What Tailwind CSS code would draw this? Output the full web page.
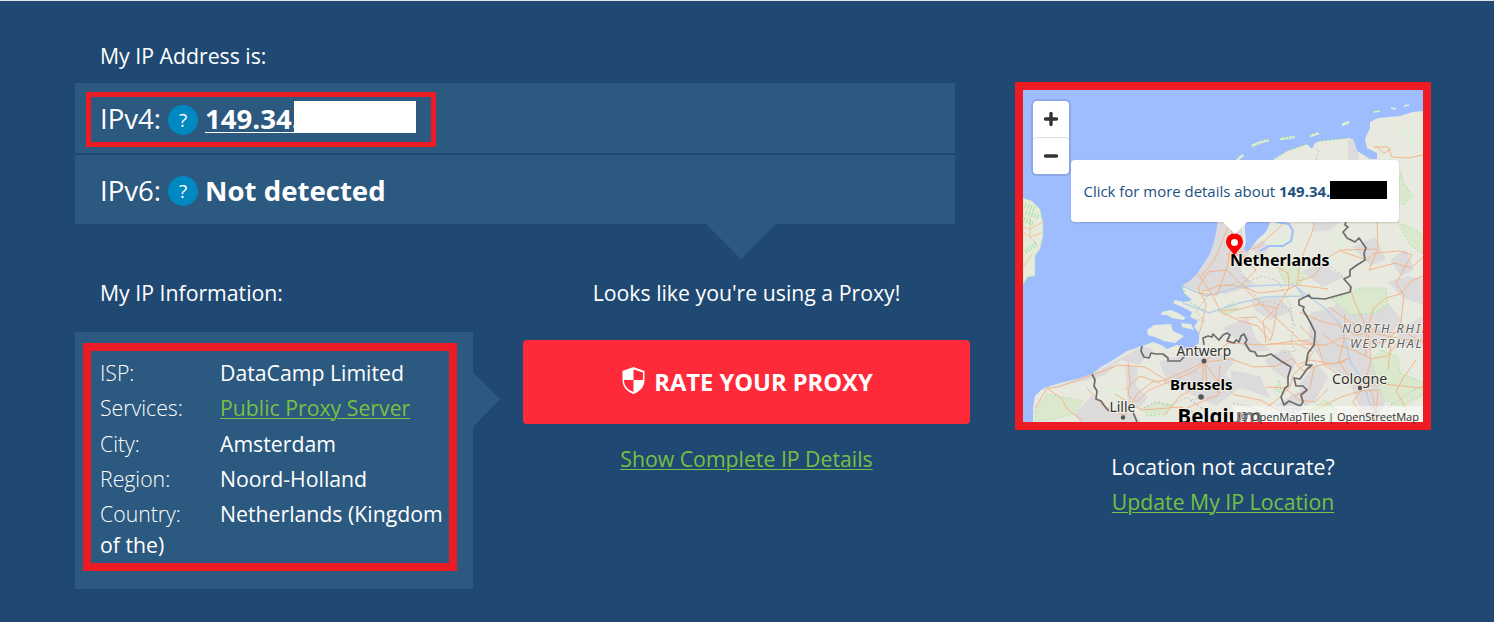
<!DOCTYPE html>
<html lang="en">
<head>
<meta charset="utf-8">
<title>My IP Address</title>
<script src="https://cdn.jsdelivr.net/npm/@tailwindcss/browser@4"></script>
</head>
<body class="h-[622px] overflow-hidden border-t border-[#dfe6ec] bg-[#1f4972] font-['Open_Sans',sans-serif] text-[21.25px] leading-[30px] text-white">
<main class="flex pl-[75px]">
  <div class="w-[895px] shrink-0">
    <h1 class="pt-[40px] pl-[25px]">My IP Address is:</h1>
    <section class="relative mt-[12px] w-[880px]">
      <div class="relative flex h-[70px] items-center bg-[#2c5980] pl-[25px] text-[27.6px]">
        <span class="w-[68px]">IPv4:</span>
        <span class="mt-[3px] flex size-[30px] items-center justify-center rounded-full bg-[#0089c1] text-[19px]">?</span>
        <a class="ml-[7px] font-bold underline decoration-1 underline-offset-3">149.34.</a>
        <span class="absolute top-[18px] left-[219px] h-8 w-[122px] bg-white"></span>
        <span class="absolute top-[9px] left-[11px] h-[55px] w-[350px] border-5 border-[#ed1c24]"></span>
      </div>
      <div class="mt-[2px] flex h-[69px] items-center bg-[#2c5980] pl-[25px] text-[27.6px]">
        <span class="w-[68px]">IPv6:</span>
        <span class="mt-[3px] flex size-[30px] items-center justify-center rounded-full bg-[#0089c1] text-[19px]">?</span>
        <span class="ml-[7px] font-bold">Not detected</span>
      </div>
      <svg class="absolute top-full left-[631px] h-[35px] w-[70px]" viewBox="0 0 70 35"><path d="M0 0H70L35 35Z" fill="#2c5980"/></svg>
    </section>
    <div class="flex gap-[50px]">
      <div class="w-[398px]">
        <h2 class="mt-[54px] pl-[25px]">My IP Information:</h2>
        <section class="relative mt-[24px] h-[257px] bg-[#2c5980] pt-[26px] pl-[25px]">
          <div class="flex h-[35px]"><span class="w-[120px] font-light">ISP:</span><span>DataCamp Limited</span></div>
          <div class="flex h-[36px]"><span class="w-[120px] font-light">Services:</span><a class="text-[#76c043] underline decoration-1 underline-offset-2">Public Proxy Server</a></div>
          <div class="flex h-[35px]"><span class="w-[120px] font-light">City:</span><span>Amsterdam</span></div>
          <div class="flex h-[35px]"><span class="w-[120px] font-light">Region:</span><span>Noord-Holland</span></div>
          <div class="flex h-[31px] whitespace-nowrap"><span class="w-[120px] font-light">Country:</span><span>Netherlands (Kingdom</span></div>
          <div>of the)</div>
          <span class="absolute top-[11px] left-2 h-[228px] w-[374px] border-8 border-[#ed1c24]"></span>
          <svg class="absolute top-10 left-full h-[55px] w-[27px]" viewBox="0 0 27 55"><path d="M0 0L27 27.500L0 55Z" fill="#2c5980"/></svg>
        </section>
      </div>
      <div class="flex w-[447px] flex-col items-center">
        <p class="mt-[54px]">Looks like you're using a Proxy!</p>
        <button class="mt-8 flex h-[84px] w-full items-center justify-center gap-[9px] rounded bg-[#ff2a39] pl-[2px] text-[23.7px] font-bold">
          <svg class="-mt-[3px] h-[27px] w-[23px]" viewBox="0 0 23 27"><path fill="#fff" fill-rule="evenodd" d="M11.500 0L22.500 4V13C22.500 20 18 24.500 11.500 27C5 24.500 .5 20 .5 13V4ZM11.500 2.500V13H21V5.500ZM11.500 13H2C2 19 5.500 22.500 11.500 25Z"/></svg>
          <span>RATE YOUR PROXY</span>
        </button>
        <a class="mt-[20px] text-[#76c043] underline decoration-1 underline-offset-2">Show Complete IP Details</a>
      </div>
    </div>
  </div>
  <aside class="ml-[45px] flex w-[416px] flex-col items-center pt-[81px]">
    <div class="relative h-[348px] w-full border-8 border-[#ed1c24]">
      <svg class="block h-[332px] w-[400px]" viewBox="1023 90 400 332" font-family="'Noto Sans',sans-serif">
        <defs>
          <path id="land" d="M1033 422L1033 408L1035 396L1041 390L1047 387L1060 383L1077 379L1092 374L1101 367L1110 362L1127 351L1142 346L1153 342L1161 345L1167 349L1177 345L1186 349L1195 347L1199 342L1199 333L1194 327L1198 321L1190 317L1192 312L1182 307L1173 303L1175 300L1184 302L1192 300L1184 293L1182 286L1190 281L1197 274L1203 265L1210 254L1215 239L1218 222L1225 190L1233 184L1250 188L1272 160L1287 151L1307 144L1312 149L1315 143L1320 141L1348 138L1353 139L1357 151L1370 159L1377 159L1377 153L1367 148L1365 139L1370 128L1370 122L1378 118L1400 116L1413 112L1423 111V422Z"/>
          <clipPath id="landclip"><use href="#land"/></clipPath>
        </defs>
        <rect x="1023" y="90" width="400" height="332" fill="#9ebdff"/>
        <path fill="#e6ebdb" stroke="#a9dfae" stroke-dasharray="2 2" d="M1023 198L1032 201L1040 209L1043 223L1043 236L1040 249L1035 256L1035 276L1028 277L1023 284Z"/>
        <path fill="none" stroke="#f0c79c" d="M1023 227L1030 229L1043 222M1023 232L1030 237L1042 233M1030 217L1030 237L1037 244M1023 267L1032 254"/>
        <path fill="none" stroke="#9de59d" stroke-width="5" stroke-dasharray="1 2" d="M1025 205L1035 209M1026 212L1038 217M1024 219L1034 224M1036 244L1025 252"/>
        <use href="#land" fill="#e8eadf"/>
        <g fill="#e7ebdf">
          <path d="M1162 312L1170 310L1176 312L1186 318L1183 320L1172 318L1167 315L1161 315ZM1147 330L1154 325L1171 324L1173 331L1184 336L1175 343L1164 341L1155 337L1148 335ZM1181 323L1191 324L1194 330L1182 327Z"/>
        </g>
        <path fill="none" stroke="#dff0cf" stroke-width="2.500" d="M1237 160L1243 155M1252 146L1261 142L1269 140M1280 139L1295 137M1310 136L1319 133M1342 125L1349 122"/>
        <path fill="none" stroke="#dff0cf" stroke-width="1.500" d="M1373 112L1380 111M1391 108L1396 109M1404 106L1409 105"/>
        <path fill="none" stroke="#8ad6a0" stroke-dasharray="2 2" d="M1237 158L1243 153M1252 148L1262 141L1270 139M1280 138L1295 137M1310 135L1319 132M1273 160L1287 151L1307 144M1321 141L1348 138M1373 111L1380 110M1183 286L1186 300L1205 311"/>
        <g clip-path="url(#landclip)">
          <g fill="#dcdadb">
            <path d="M1182 286L1210 254L1219 222L1236 226L1239 243L1250 252L1239 272L1257 285L1225 294L1196 290ZM1092 374L1142 346L1153 350L1139 365L1121 360L1105 375L1083 381L1047 389ZM1125 365L1138 367L1136 386L1148 397L1139 409L1128 401ZM1159 362L1201 348L1236 359L1225 375L1240 387L1216 406L1184 391L1169 386ZM1173 364L1195 367L1187 382L1163 384Z"/>
            <path d="M1348 140L1353 138L1358 151L1359 165L1348 159ZM1230 222L1240 222L1243 237L1232 239ZM1251 247L1262 240L1270 248L1260 259ZM1310 313L1335 306L1341 292L1360 302L1384 299L1402 319L1386 342L1367 351L1379 370L1372 384L1361 390L1344 375L1325 364L1309 344ZM1350 384L1373 371L1391 386L1379 419L1365 420ZM1250 300L1279 297L1292 311L1270 320L1256 311ZM1223 328L1248 317L1256 339L1270 350L1250 352ZM1264 360L1285 348L1297 360L1288 380L1272 370ZM1388 282L1408 276L1423 279V305L1402 297ZM1313 223L1340 222L1330 230L1313 232ZM1230 370L1260 376L1270 398L1248 390L1233 387ZM1074 414L1092 396L1108 410L1130 408L1141 422H1080ZM1300 383L1316 363L1328 377L1315 401L1300 405ZM1301 272L1320 263L1344 277L1323 287Z"/>
            <path d="M1353 247L1375 237L1386 260L1370 265ZM1390 260L1406 249L1414 270L1401 276ZM1273 408L1298 391L1312 402L1295 414ZM1398 330L1423 316V347L1400 346Z"/>
          </g>
          <g fill="#dbe8cd" stroke="#a9e5aa" stroke-dasharray="2 2">
            <path d="M1035 411L1047 394L1064 397L1083 401L1073 414L1056 419L1035 421ZM1332 299L1361 288L1386 288L1388 304L1375 313L1350 315ZM1371 360L1381 350L1398 357L1400 373L1423 382V395L1401 407L1383 399ZM1279 271L1287 258L1304 276L1301 284L1284 282ZM1218 311L1233 302L1238 310L1224 315ZM1401 172L1405 185L1412 195L1404 205L1395 198ZM1398 222L1411 228L1423 235V254L1410 245ZM1279 380L1282 393L1275 390ZM1144 408L1158 402L1173 405L1166 414L1147 416ZM1310 410L1325 400L1337 410L1330 422H1311Z"/>
          </g>
          <path fill="none" stroke="#e3eedb" stroke-width="6" d="M1302 163L1360 168M1400 125L1416 145M1268 246L1300 239M1330 234L1345 248M1104 388L1126 399"/>
          <g fill="none" stroke="#b9d0e8" stroke-width="1.500">
            <path d="M1182 286L1206 296L1239 287L1273 285L1294 285L1308 296L1326 309L1340 324L1346 345L1350 361L1364 382L1369 402L1385 422M1183 303L1209 313L1239 303L1265 297L1303 296L1296 286"/>
          </g>
          <g fill="none" stroke="#c1bfc0" stroke-dasharray="2 2">
            <path d="M1240 270L1247 282L1262 276L1278 281L1291 306L1293 329L1291 344L1296 351L1281 353M1220 287L1239 282L1251 290L1261 303L1270 301L1288 309L1296 327M1190 317L1205 322L1196 311L1211 292M1140 410L1155 402L1170 406L1187 397L1204 410L1190 400L1220 396M1300 265L1330 266L1345 278M1380 422L1390 406L1413 390L1423 386M1316 160L1319 150L1312 145M1233 403L1250 407L1272 417L1284 408L1319 410"/>
          </g>
          <g fill="none" stroke="#f2b58c" stroke-linejoin="round">
            <path d="M1035 408L1047 388L1058 387L1081 379L1100 372L1119 365L1145 367L1166 380L1183 372L1204 362L1231 359L1254 367L1276 366L1291 359M1047 388L1062 399L1067 409L1082 420M1087 388L1102 405L1125 416L1137 394L1152 382L1167 380M1128 362L1130 381L1128 396L1137 402L1149 390L1169 382L1195 371L1206 361M1204 359L1202 385L1180 396L1165 415M1204 362L1218 381L1235 395L1260 400L1280 411M1205 361L1228 343L1265 345L1287 342L1309 340M1199 344L1179 336L1160 335M1197 340L1202 324L1206 304L1198 288L1208 272L1227 270L1244 287L1258 293L1286 290L1298 285L1328 289M1200 278L1215 259L1230 222L1233 239L1227 267L1217 295L1199 293L1220 285L1240 286L1256 270L1243 256L1226 254M1198 274L1211 293L1221 312L1240 321L1258 326L1270 341L1273 333L1277 308L1289 288L1288 273L1270 263L1243 256M1235 254L1258 247L1283 224M1297 285L1300 262L1313 230L1314 216M1221 311L1240 309L1259 304L1276 308L1263 321L1266 343M1243 287L1265 308L1286 327L1301 341L1318 345M1268 344L1298 344L1313 352L1305 364L1293 375L1290 387L1279 398L1265 409M1291 358L1303 371L1320 365L1345 362M1266 387L1285 388L1299 400L1315 402L1328 389"/>
            <path d="M1377 222L1378 249L1369 270L1395 263L1411 268L1423 257M1378 249L1340 250L1329 257L1314 276L1299 281M1373 147L1388 147L1392 157L1408 158L1423 155M1376 146L1384 153L1391 149M1340 251L1367 260L1375 253L1400 251L1412 255L1396 283L1404 295L1400 330L1423 342M1366 356L1366 336L1373 309L1386 298L1400 294L1411 281L1423 276M1299 312L1323 322L1338 325L1356 335L1372 333L1398 338L1418 341M1345 314L1344 339L1339 361L1345 371L1361 386L1383 384L1423 388M1322 333L1337 345L1356 351L1371 359L1387 356L1400 340M1329 307L1351 323L1380 332L1399 333M1349 284L1355 303L1368 331L1371 360L1365 382L1373 396L1377 419M1300 326L1317 342L1324 365L1340 375L1362 388M1299 364L1310 360L1334 364L1350 358M1315 410L1341 397L1361 391L1378 390L1376 410L1365 421M1361 390L1353 402L1360 412L1381 421M1272 333L1256 317L1238 318M1301 344L1327 345L1340 338L1384 343L1401 327M1391 344L1388 370M1160 383L1140 376L1125 390M1115 394L1142 410L1180 407L1216 420M1220 365L1218 395L1187 408M1205 361L1207 387L1221 393M1314 368L1310 388L1295 396M1416 360L1404 377L1396 391L1407 410"/>
          </g>
          <path fill="#9ebdff" d="M1245 218H1272L1266 232L1258 239L1250 249L1247 252L1244 249L1246 242L1245 231Z"/>
          <path fill="none" stroke="#9ebdff" stroke-width="2" d="M1276 222L1289 224L1293 231L1291 241L1283 246L1269 246L1260 251"/>
          <path fill="none" stroke="#6c6c6c" stroke-width="1.700" stroke-linejoin="round" d="M1142 346L1141 351L1144 357L1149 358L1151 353L1156 354L1163 354L1168 358L1168 361L1180 361L1186 355M1204 345L1203 338L1208 336L1212 337L1213 334L1219 340L1223 335L1227 333L1230 335L1227 341L1234 343L1236 340L1239 342L1241 336L1244 334L1247 340L1245 343L1250 351L1255 352L1257 356L1265 356L1271 354L1281 361L1291 367L1288 377L1288 386L1285 388L1281 397L1284 405L1289 401L1300 406L1303 402L1301 395L1307 390L1303 386L1296 386L1294 378L1300 379L1307 369L1312 365L1306 365L1308 353L1314 345L1315 335L1315 332L1309 320L1303 310L1304 307L1299 305L1299 300L1309 295L1311 298L1325 299L1350 292L1351 287L1344 279L1350 276L1350 270L1357 265L1365 260L1364 253L1366 248L1359 238L1355 242L1347 238L1343 232L1348 227L1345 225L1346 221M1092 374L1095 380L1094 386L1097 391L1096 399L1101 401L1106 408L1109 411M1133 412L1137 422"/>
        </g>
        <g fill="#555"><circle cx="1204" cy="361" r="2.500"/><circle cx="1201" cy="397" r="2.800"/><circle cx="1123" cy="417.500" r="2.200"/><circle cx="1360" cy="388" r="2.200"/></g>
        <g fill="#333" stroke="#f1f1e9" stroke-width="2" paint-order="stroke" stroke-linejoin="round">
          <text x="1176.500" y="356" font-size="13.700">Antwerp</text>
          <text x="1109.500" y="412" font-size="13.900">Lille</text>
          <text x="1332" y="383.500" font-size="14.200">Cologne</text>
          <text x="1170" y="390" font-size="15" font-weight="700" fill="#000">Brussels</text>
          <text x="1230" y="266" font-size="16" font-weight="700" fill="#000">Netherlands</text>
          <text x="1177.500" y="424" font-size="20.500" font-weight="700" fill="#000">Belgium</text>
          <g fill="#626262" font-size="12.500" font-style="italic" letter-spacing="1.900"><text x="1342" y="333">NORTH RHINE</text><text x="1350" y="348">WESTPHALIA</text></g>
        </g>
        <path fill="red" d="M1234.500 255.500C1231 250 1226 247 1226 241.500A8.500 8 0 0 1 1243 241.500C1243 247 1238 250 1234.500 255.500Z"/><circle cx="1234.500" cy="242.500" r="3.500" fill="#fff"/>
      </svg>
      <div class="absolute top-[11px] left-[10px] h-[73px] w-9 rounded bg-white shadow-[0_0_0_2px_rgba(0,0,0,0.1)]">
        <svg class="h-[73px] w-9" viewBox="0 0 36 73"><path d="M0 39Q0 36.500 3 36.500H33Q36 36.500 36 39" fill="none" stroke="#ddd"/><path d="M12.500 18H23.500M18 12.500V23.500M12.500 55H23.500" fill="none" stroke="#333" stroke-width="3.400" stroke-linecap="round"/></svg>
      </div>
      <div class="absolute top-[70px] left-12 flex h-[62px] w-[328px] items-center rounded bg-white pl-[12.5px] text-[14.95px] whitespace-nowrap text-[#23517e] shadow-[0_1px_2px_rgba(0,0,0,0.15)]">
        <span>Click for more details about <b>149.34.</b></span>
        <span class="absolute top-[21px] left-[259px] h-[18px] w-[57px] bg-black"></span>
        <svg class="absolute top-full left-[152px] h-3 w-6" viewBox="0 0 24 12"><path d="M0 0H24L12 12Z" fill="#fff"/></svg>
      </div>
      <div class="absolute right-0 bottom-0 h-4 bg-white/50 pr-1 pl-[6px] text-[11.05px] leading-[22px] whitespace-nowrap text-[#333]"><span>© OpenMapTiles | OpenStreetMap</span></div>
    </div>
    <p class="mt-[22px]">Location not accurate?</p>
    <a class="mt-[5px] text-[#76c043] underline decoration-1 underline-offset-2">Update My IP Location</a>
  </aside>
</main>
</body>
</html>
